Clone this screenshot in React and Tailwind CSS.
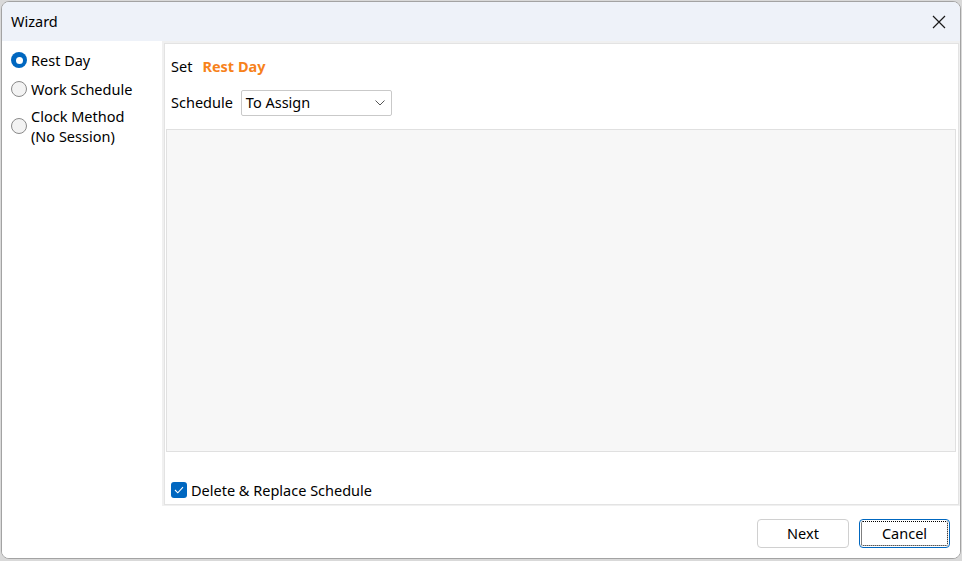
export default function App() {
  const options = [
    { id: 'rest', label: ['Rest Day'], checked: true, gap: 'mt-0' },
    { id: 'work', label: ['Work Schedule'], checked: false, gap: 'mt-[9px]' },
    { id: 'clock', label: ['Clock Method', '(No Session)'], checked: false, gap: 'mt-[7px]' },
  ];

  return (
    <div className="w-[962px] h-[561px] bg-[#d9d9d9] pl-px pt-px font-['Segoe_UI','Noto_Sans',sans-serif] text-[14.5px] text-black overflow-hidden">
      <div className="w-[960px] h-[558px] bg-white border border-[#a3a3a3] rounded-[8px] overflow-hidden flex flex-col">
        {/* TITLE BAR */}
        <div className="h-[39px] shrink-0 bg-[#eef2f9] flex items-center justify-between pl-[9px] pr-[14px]">
          <span className="leading-none">Wizard</span>
          <svg width="14" height="14" viewBox="0 0 14 14" className="text-[#1a1a1a]">
            <path d="M1 1 L13 13 M13 1 L1 13" stroke="currentColor" strokeWidth="1.2" fill="none" />
          </svg>
        </div>

        {/* BODY */}
        <div className="flex h-[465px] shrink-0">
          {/* Left options */}
          <div className="w-[160px] shrink-0 bg-white flex flex-col pt-[9px] pl-[9px]">
            {options.map((o) => (
              <div key={o.id} className={`flex items-center gap-[4px] ${o.gap}`}>
                {o.checked ? (
                  <span className="w-[16px] h-[16px] rounded-full bg-[#0067c0] flex items-center justify-center shrink-0">
                    <span className="w-[7px] h-[7px] rounded-full bg-white" />
                  </span>
                ) : (
                  <span className="w-[16px] h-[16px] rounded-full border border-[#8a8a8a] bg-[#f3f3f3] shrink-0" />
                )}
                <div className="leading-[20px]">
                  {o.label.map((l) => (
                    <div key={l}>{l}</div>
                  ))}
                </div>
              </div>
            ))}
          </div>

          {/* Right panel */}
          <div className="flex-1 bg-[#f0f0f0] pt-[2px] pl-[2px] pr-[1px] pb-[1px] flex">
            <div className="flex-1 bg-white border border-[#e3e3e3] flex flex-col pl-[1px] pr-[1px]">
              <div className="flex items-center h-[46px] shrink-0 pl-[5px] gap-[10px]">
                <span>Set</span>
                <span className="font-bold text-[#f7821b]">Rest Day</span>
              </div>
              <div className="flex items-center h-[26px] shrink-0 pl-[5px] gap-[8px]">
                <span>Schedule</span>
                <div className="w-[151px] h-[26px] border border-[#c9c9c9] rounded-[2px] bg-white flex items-center justify-between pl-[4px] pr-[6px]">
                  <span>To Assign</span>
                  <svg width="10" height="6" viewBox="0 0 10 6">
                    <path d="M0.5 0.5 L5 5 L9.5 0.5" stroke="#555" strokeWidth="1" fill="none" />
                  </svg>
                </div>
              </div>
              <div className="mt-[13px] h-[323px] shrink-0 mr-[1px] bg-[#f7f7f7] border border-[#e0e0e0]" />
              <div className="flex-1 flex items-end pl-[5px] pb-[5px] gap-[4px]">
                <span className="w-[16px] h-[16px] mb-[1px] rounded-[3px] bg-[#0067c0] flex items-center justify-center">
                  <svg width="10" height="8" viewBox="0 0 10 8">
                    <path d="M1 4 L3.8 6.8 L9 1.2" stroke="white" strokeWidth="1.1" fill="none" />
                  </svg>
                </span>
                <span className="leading-[18px]">Delete &amp; Replace Schedule</span>
              </div>
            </div>
          </div>
        </div>

        {/* FOOTER */}
        <div className="flex-1 flex items-start justify-end gap-[10px] pr-[10px] pt-[13px] bg-white">
          <button className="w-[92px] h-[29px] border border-[#d0d0d0] rounded-[4px] bg-white flex items-center justify-center">
            Next
          </button>
          <button className="w-[91px] h-[29px] border border-[#0067c0] rounded-[4px] bg-white p-[1px] flex">
            <span className="flex-1 border border-dotted border-black rounded-[2px] flex items-center justify-center">
              Cancel
            </span>
          </button>
        </div>
      </div>
    </div>
  );
}
